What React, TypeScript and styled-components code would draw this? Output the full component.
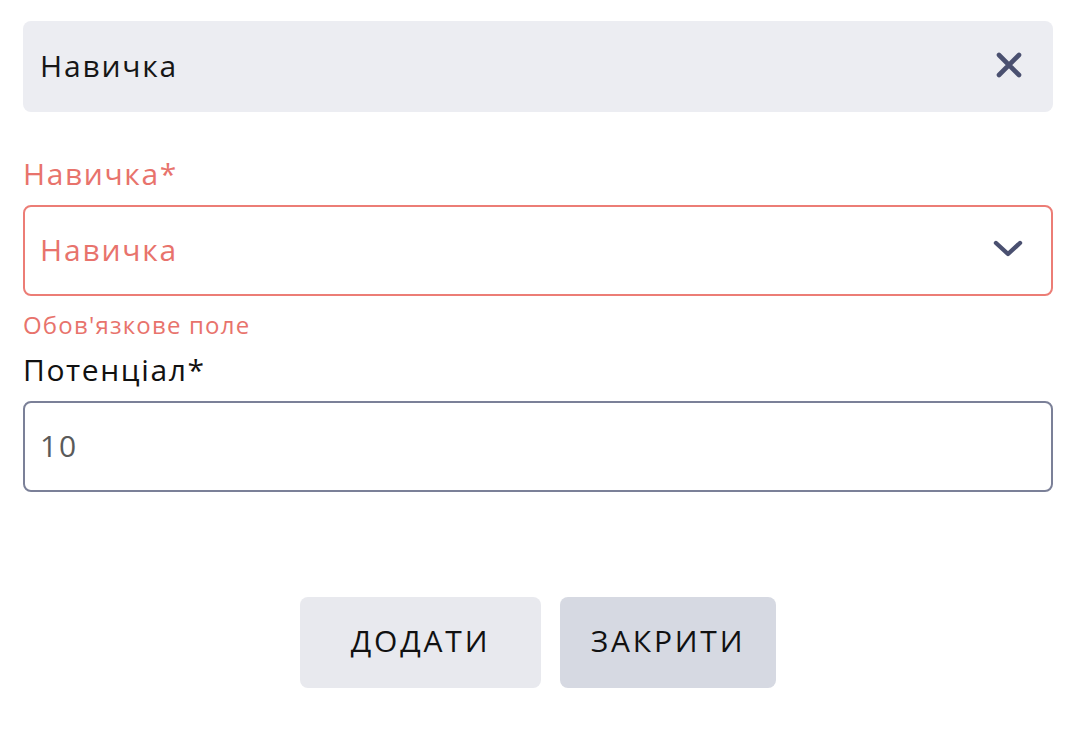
import React from "react";
import styled, { createGlobalStyle } from "styled-components";

const Global = createGlobalStyle`
  html, body { margin: 0; padding: 0; background: #ffffff; }
  body { font-family: "Open Sans", "Noto Sans", sans-serif; }
  * { box-sizing: border-box; }
`;

const Form = styled.div`
  display: flex;
  flex-direction: column;
  width: 1030px;
  margin: 21px 0 0 23px;
`;

const Chip = styled.div`
  display: flex;
  align-items: center;
  justify-content: space-between;
  height: 91px;
  padding: 0 31px 3px 17px;
  background: #ecedf2;
  border-radius: 8px;
  font-size: 30px;
  letter-spacing: 1.8px;
  color: #161616;
`;

const Label = styled.div<{ $error?: boolean }>`
  font-size: 30px;
  line-height: 40px;
  letter-spacing: 1.6px;
  color: ${(p) => (p.$error ? "#e8736c" : "#111111")};
  margin-top: ${(p) => (p.$error ? "42px" : "10px")};
  margin-bottom: 11px;
`;

const Field = styled.div<{ $error?: boolean }>`
  display: flex;
  align-items: center;
  justify-content: space-between;
  height: 91px;
  padding: 0 28px 3px 15px;
  border: 2px solid ${(p) => (p.$error ? "#ec7d76" : "#7b8098")};
  border-radius: 8px;
  font-size: 30px;
  letter-spacing: 1.8px;
  color: ${(p) => (p.$error ? "#e8736c" : "#5a5a5a")};
  background: #fff;
`;

const ErrorText = styled.div`
  font-size: 24px;
  line-height: 30px;
  letter-spacing: 1.2px;
  color: #e8736c;
  margin-top: 14px;
`;

const Buttons = styled.div`
  display: flex;
  justify-content: center;
  gap: 19px;
  margin-top: 105px;
`;

const Button = styled.button<{ $w: number; $dark?: boolean }>`
  width: ${(p) => p.$w}px;
  height: 91px;
  padding: 0 0 5px;
  border: none;
  border-radius: 8px;
  background: ${(p) => (p.$dark ? "#d6d9e2" : "#e8e9ee")};
  font-family: inherit;
  font-size: 30px;
  letter-spacing: 2.8px;
  color: #111111;
  text-transform: uppercase;
`;

const Icon = styled.svg`
  display: block;
`;

export default function App() {
  return (
    <>
      <Global />
      <Form>
        <Chip>
          <span>Навичка</span>
          <Icon width="26" height="26" viewBox="0 0 26 26">
            <path d="M3 3 L23 23 M23 3 L3 23" stroke="#4a5070" strokeWidth="4.6" strokeLinecap="round" />
          </Icon>
        </Chip>
        <Label $error>Навичка*</Label>
        <Field $error>
          <span>Навичка</span>
          <Icon width="30" height="20" viewBox="0 0 30 20">
            <path d="M3 4 L15 15 L27 4" stroke="#4a5070" strokeWidth="4.4" fill="none" strokeLinecap="round" strokeLinejoin="round" />
          </Icon>
        </Field>
        <ErrorText>Обов'язкове поле</ErrorText>
        <Label>Потенціал*</Label>
        <Field>
          <span>10</span>
        </Field>
        <Buttons>
          <Button $w={241}>Додати</Button>
          <Button $w={216} $dark>Закрити</Button>
        </Buttons>
      </Form>
    </>
  );
}
